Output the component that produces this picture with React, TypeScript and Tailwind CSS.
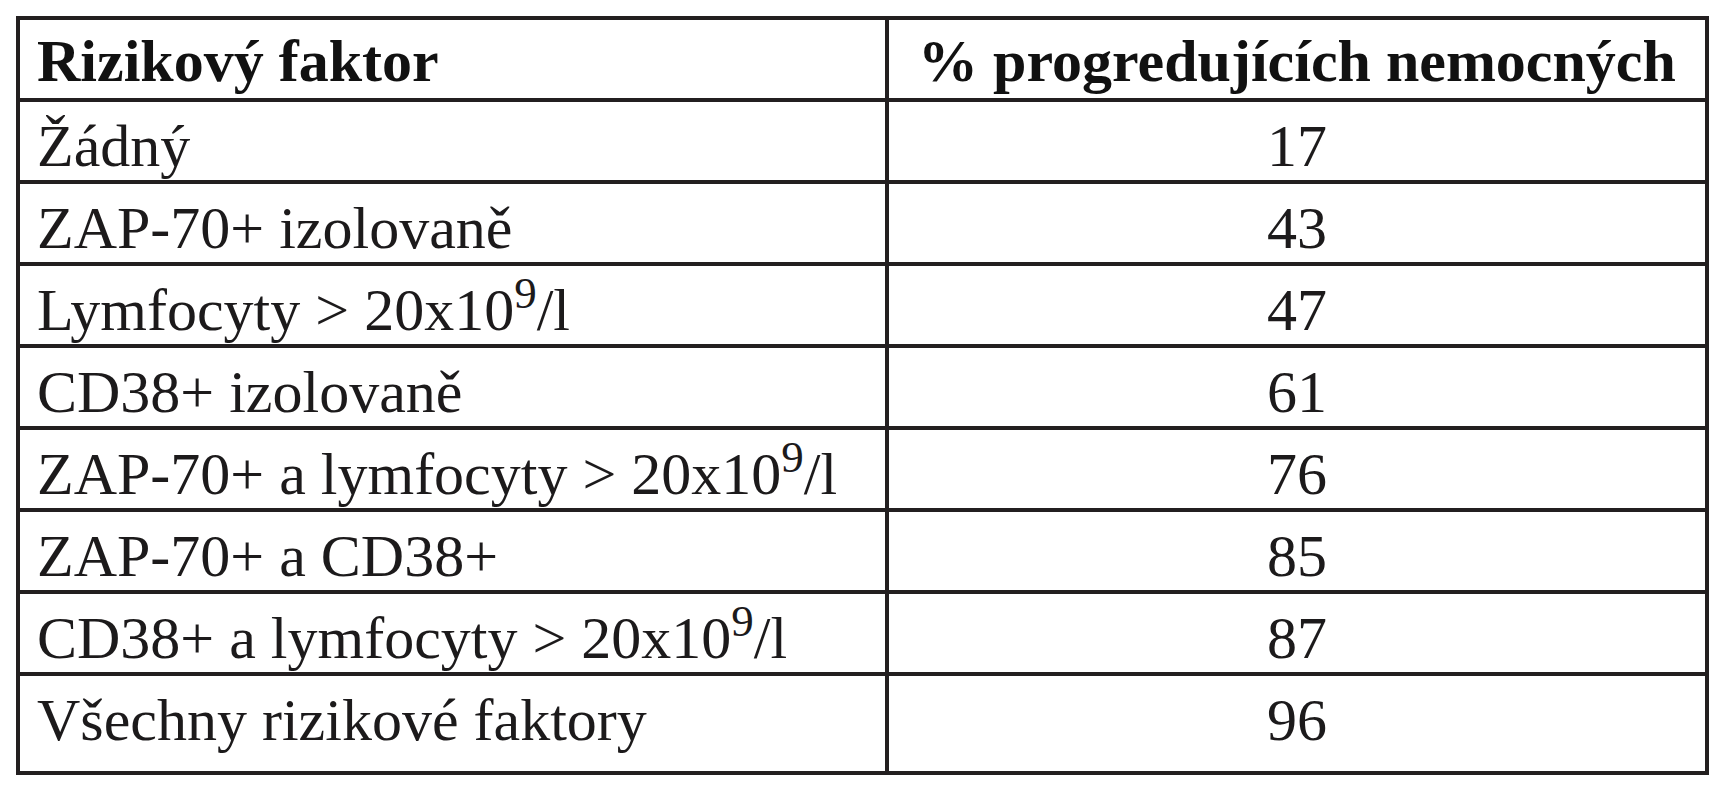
const rows: { label: React.ReactNode; value: string }[] = [
  { label: "Žádný", value: "17" },
  { label: "ZAP-70+ izolovaně", value: "43" },
  {
    label: (
      <>
        Lymfocyty &gt; 20x10<sup>9</sup>/l
      </>
    ),
    value: "47",
  },
  { label: "CD38+ izolovaně", value: "61" },
  {
    label: (
      <>
        ZAP-70+ a lymfocyty &gt; 20x10<sup>9</sup>/l
      </>
    ),
    value: "76",
  },
  { label: "ZAP-70+ a CD38+", value: "85" },
  {
    label: (
      <>
        CD38+ a lymfocyty &gt; 20x10<sup>9</sup>/l
      </>
    ),
    value: "87",
  },
  { label: "Všechny rizikové faktory", value: "96" },
];

export default function App() {
  return (
    <div className="min-h-screen bg-white p-4 font-['Liberation_Serif',serif] text-[60px] leading-[60px] text-[#1c1a1b]">
      <div className="w-[1693px] border-4 border-[#231f20]">
        {/* Header */}
        <div className="flex h-[78px] font-bold text-[#111]">
          <div className="w-[865px] pl-[17px] pt-[11px]">Rizikový faktor</div>
          <div className="flex-1 border-l-4 border-[#231f20] pt-[11px] text-center">
            % progredujících nemocných
          </div>
        </div>

        {/* Rows */}
        {rows.map((r, i) => (
          <div
            key={r.value}
            className={
              i === rows.length - 1
                ? "flex h-[99px] border-t-4 border-[#231f20]"
                : "flex h-[82px] border-t-4 border-[#231f20]"
            }
          >
            <div className="w-[865px] whitespace-nowrap pl-[17px] pt-[14px]">{r.label}</div>
            <div className="flex-1 border-l-4 border-[#231f20] pt-[14px] text-center">{r.value}</div>
          </div>
        ))}
      </div>
    </div>
  );
}
